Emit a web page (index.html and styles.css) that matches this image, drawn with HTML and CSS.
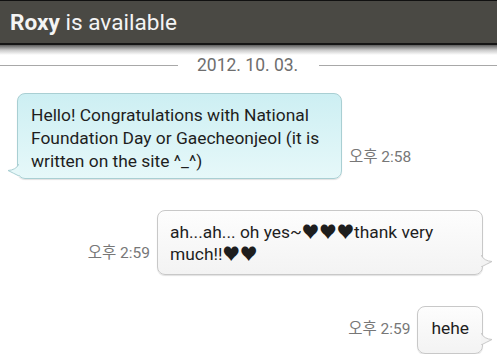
FILE: index.html
```html
<!DOCTYPE html>
<html lang="ko">
<head>
    <meta charset="UTF-8">
    <meta name="viewport" content="width=device-width, initial-scale=1.0">
    <title>Roxy</title>
    <link rel="stylesheet" href="styles.css">
</head>
<body>
    <div class="header">
        <h1><b>Roxy</b> is available</h1>
    </div>
    <div class="shade"></div>

    <div class="date-row">
        <span class="line"></span>
        <span class="date">2012. 10. 03.</span>
        <span class="line"></span>
    </div>

    <div class="chat">
        <div class="msg them">
            <div class="bubble cyan">
                Hello! Congratulations with National Foundation Day or Gaecheonjeol (it is written on the site ^_^)
                <svg class="tail" width="12" height="12" viewBox="0 0 12 12">
                    <path d="M12 0 Q9 6 1 6.5 Q6 9 12 12 Z" fill="#e6f8f9"/>
                    <path d="M12 0 Q9 6 1 6.5 Q6 9 12 12" fill="none" stroke="#a9cfd3"/>
                </svg>
            </div>
            <span class="time">오후 2:58</span>
        </div>

        <div class="msg me">
            <span class="time">오후 2:59</span>
            <div class="bubble grey wide">
                ah...ah... oh yes~♥♥♥thank very much!!♥♥
                <svg class="tail" width="12" height="12" viewBox="0 0 12 12">
                    <path d="M0 0 Q3 6 11 6.5 Q6 9 0 12 Z" fill="#f3f3f3"/>
                    <path d="M0 0 Q3 6 11 6.5 Q6 9 0 12" fill="none" stroke="#c8c8c8"/>
                </svg>
            </div>
        </div>

        <div class="msg me">
            <span class="time">오후 2:59</span>
            <div class="bubble grey short">
                hehe
                <svg class="tail" width="12" height="12" viewBox="0 0 12 12">
                    <path d="M0 0 Q3 6 11 6.5 Q6 9 0 12 Z" fill="#f3f3f3"/>
                    <path d="M0 0 Q3 6 11 6.5 Q6 9 0 12" fill="none" stroke="#c8c8c8"/>
                </svg>
            </div>
        </div>
    </div>
</body>
</html>
```

FILE: styles.css
```css
body {
    margin: 0;
    padding: 0;
    background-color: #fff;
    font-family: Roboto, "Noto Sans CJK KR", sans-serif;
    overflow: hidden;
}

.header {
    height: 42px;
    background-color: #4a4944;
    border-top: 1px solid #111;
    border-bottom: 2px solid #151515;
    padding-left: 10px;
    display: flex;
    align-items: center;
}

.header h1 {
    margin: 0;
    font-size: 22.6px;
    font-weight: normal;
    color: #f4f4f4;
}

.header h1 b {
    font-weight: bold;
}

.shade {
    height: 10px;
    background: linear-gradient(#5c5c5c, #c8c8c8 50%, #fff);
}

.date-row {
    display: flex;
    align-items: center;
    height: 20px;
}

.date-row .line {
    height: 1px;
    background-color: #a8a8a8;
}

.date-row .line:first-child {
    width: 178px;
}

.date-row .line:last-child {
    flex: 1;
}

.date {
    padding: 0 21px 0 19px;
    font-size: 17.5px;
    color: #6e6e6e;
}

.chat {
    padding-top: 18px;
}

.msg {
    display: flex;
    align-items: flex-end;
    margin-bottom: 31px;
}

.msg.them {
    padding-left: 17px;
}

.msg.me {
    justify-content: flex-end;
    padding-right: 14px;
}

.time {
    font-size: 15.5px;
    color: #777;
    margin: 0 7px 13px;
    white-space: nowrap;
}

.bubble {
    position: relative;
    border-radius: 8px;
    font-size: 17.4px;
    color: #1e1e1e;
    box-shadow: 0 1px 1px rgba(0,0,0,0.12);
}

.bubble .tail {
    position: absolute;
    bottom: 4px;
}

.cyan {
    width: 297px;
    padding: 10px 13px 5px 13px;
    line-height: 23px;
    background: linear-gradient(#cdeff3, #e6f8f9);
    border: 1px solid #a9cfd3;
}

.cyan .tail {
    left: -11px;
    bottom: 2px;
}

.grey {
    background: linear-gradient(#fdfdfd, #f3f3f3);
    border: 1px solid #c8c8c8;
}

.grey .tail {
    right: -11px;
}

.wide {
    width: 300px;
    padding: 10px 12px 9px 12px;
    line-height: 22px;
}

.wide .tail {
    bottom: 7px;
}

.short {
    padding: 10px 13px 14px 13px;
    line-height: 22px;
}

.msg.me:last-child .time {
    margin-bottom: 16px;
}

.msg.me:last-child .short .tail {
    bottom: 8px;
}
```
